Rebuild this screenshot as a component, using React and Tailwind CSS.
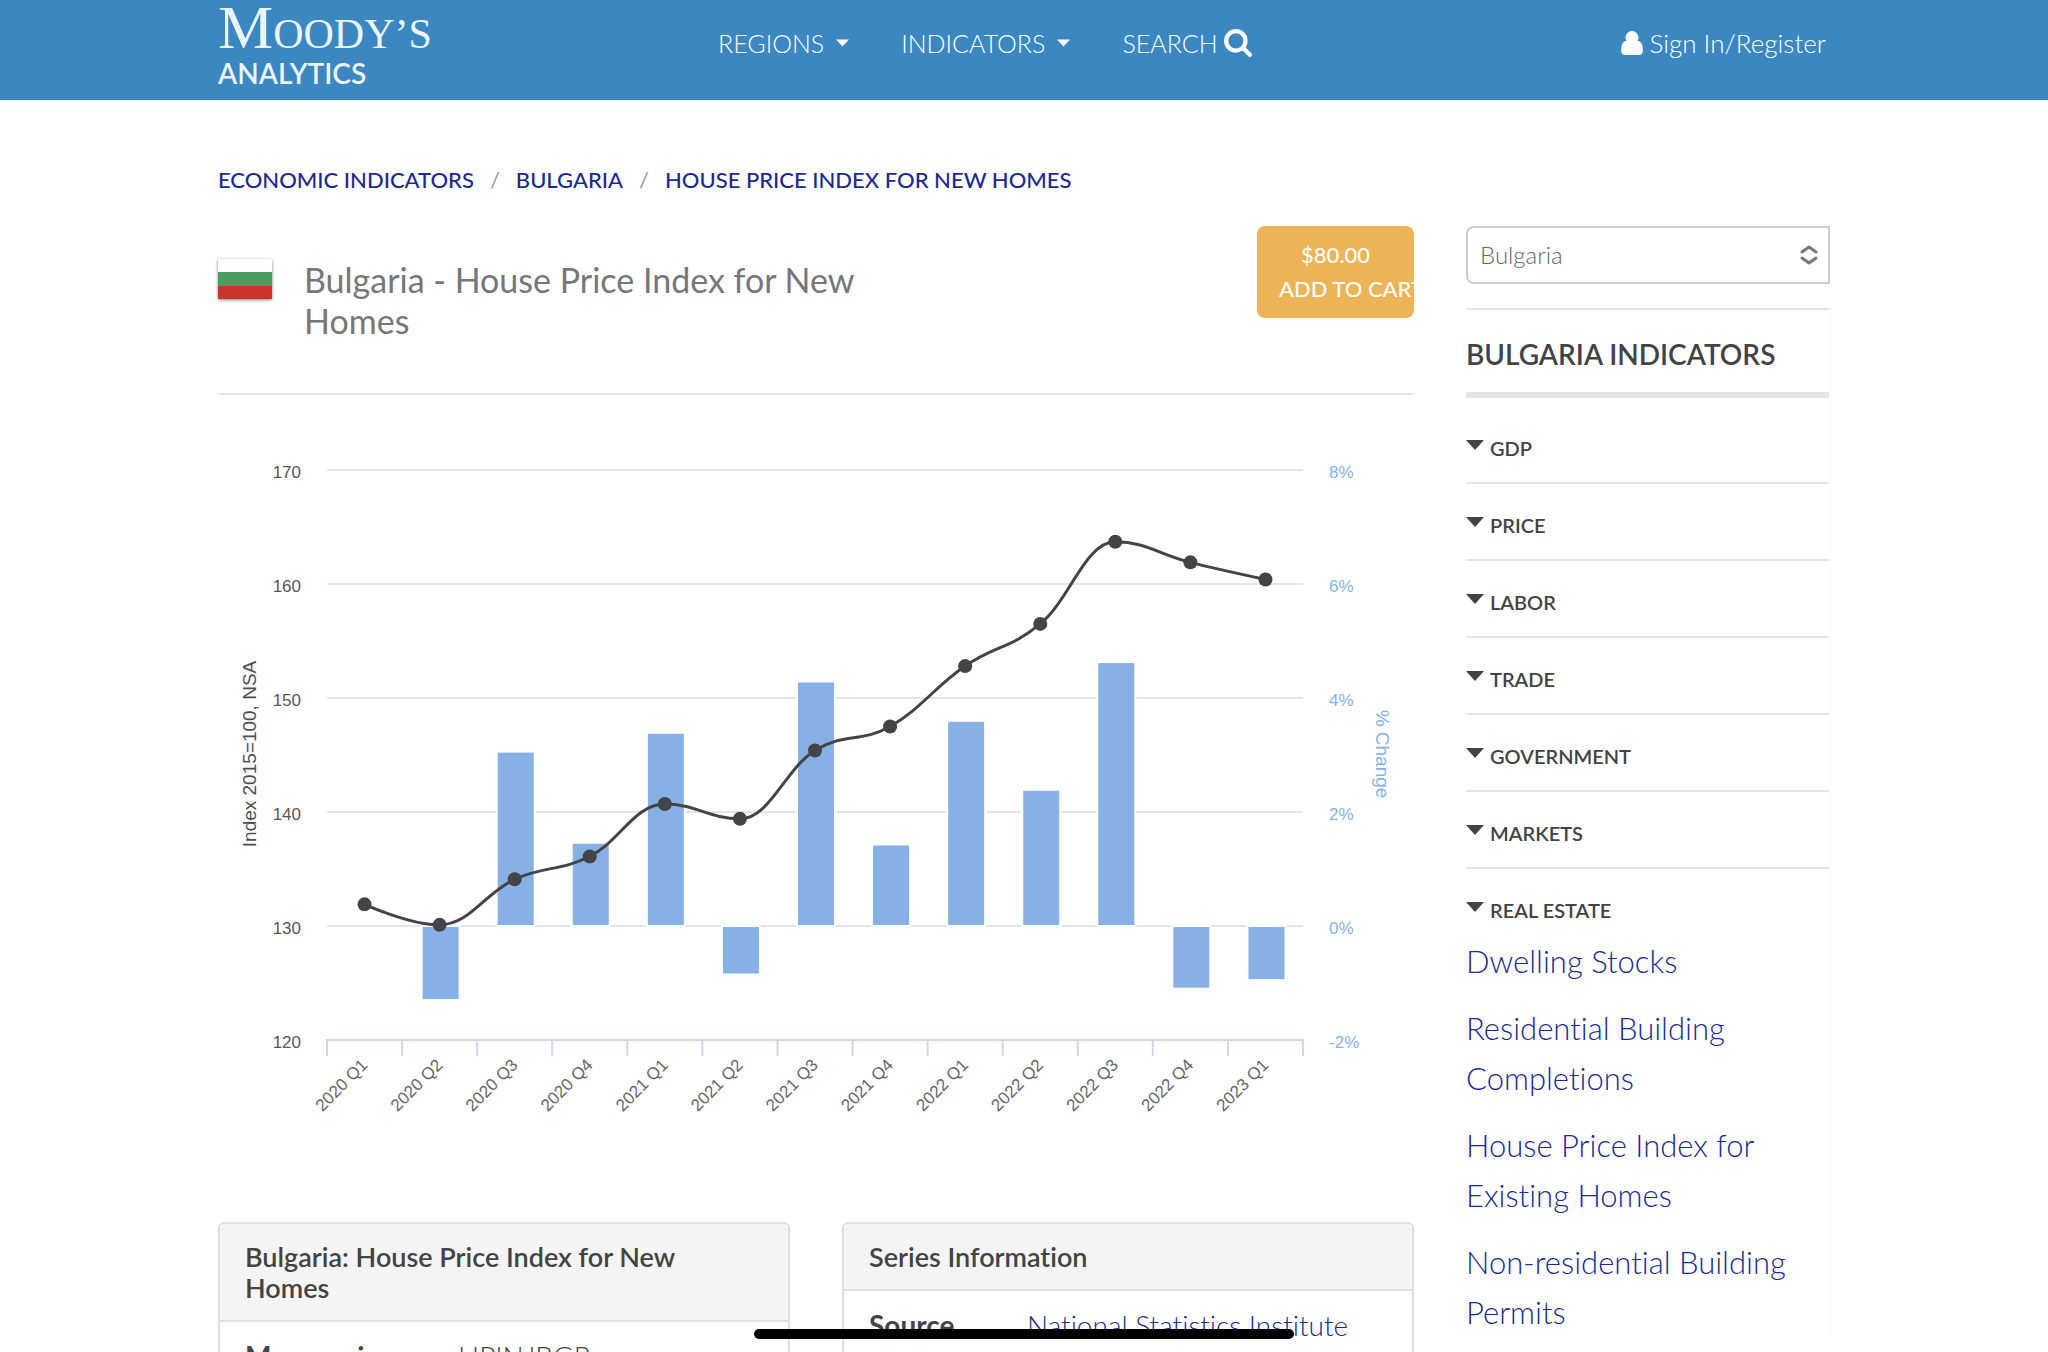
const SERIES = [
    { label: "2020 Q1", index: 131.9, change: null },
    { label: "2020 Q2", index: 130.1, change: -1.3 },
    { label: "2020 Q3", index: 134.1, change: 3.06 },
    { label: "2020 Q4", index: 136.1, change: 1.46 },
    { label: "2021 Q1", index: 140.7, change: 3.39 },
    { label: "2021 Q2", index: 139.4, change: -0.85 },
    { label: "2021 Q3", index: 145.4, change: 4.29 },
    { label: "2021 Q4", index: 147.5, change: 1.43 },
    { label: "2022 Q1", index: 152.8, change: 3.6 },
    { label: "2022 Q2", index: 156.5, change: 2.39 },
    { label: "2022 Q3", index: 163.7, change: 4.63 },
    { label: "2022 Q4", index: 161.9, change: -1.1 },
    { label: "2023 Q1", index: 160.4, change: -0.95 },
];

const GROUPS = ["GDP", "PRICE", "LABOR", "TRADE", "GOVERNMENT", "MARKETS"];

const REAL_ESTATE = [
    "Dwelling Stocks",
    "Residential Building Completions",
    "House Price Index for Existing Homes",
    "Non-residential Building Permits",
];

const PLOT = { left: 109, right: 1085, top: 14, bottom: 584 };
const STEP = (PLOT.right - PLOT.left) / SERIES.length;

const xAt = (i) => PLOT.left + STEP * (i + 0.5);
const yIndex = (v) => PLOT.bottom - ((v - 120) / 50) * (PLOT.bottom - PLOT.top);
const yChange = (v) => PLOT.bottom - ((v + 2) / 10) * (PLOT.bottom - PLOT.top);

// smooth line that never overshoots a local high or low
function splinePath(pts) {
    const s = 1.5;
    const d = s + 1;
    let prevRight = pts[0];
    let path = `M${pts[0].x} ${pts[0].y}`;

    for (let i = 1; i < pts.length; i++) {
        const last = pts[i - 1];
        const p = pts[i];
        const next = pts[i + 1];
        let left = p;
        let right = p;

        if (next) {
            const lx = (s * p.x + last.x) / d;
            let ly = (s * p.y + last.y) / d;
            const rx = (s * p.x + next.x) / d;
            let ry = (s * p.y + next.y) / d;
            const fix = ((ry - ly) * (rx - p.x)) / (rx - lx) + p.y - ry;
            ly += fix;
            ry += fix;

            if (ly > last.y && ly > p.y) {
                ly = Math.max(last.y, p.y);
                ry = 2 * p.y - ly;
            } else if (ly < last.y && ly < p.y) {
                ly = Math.min(last.y, p.y);
                ry = 2 * p.y - ly;
            }
            if (ry > next.y && ry > p.y) {
                ry = Math.max(next.y, p.y);
                ly = 2 * p.y - ry;
            } else if (ry < next.y && ry < p.y) {
                ry = Math.min(next.y, p.y);
                ly = 2 * p.y - ry;
            }
            left = { x: lx, y: ly };
            right = { x: rx, y: ry };
        }

        path += ` C${prevRight.x} ${prevRight.y} ${left.x} ${left.y} ${p.x} ${p.y}`;
        prevRight = right;
    }
    return path;
}

function Chart() {
    const points = SERIES.map((p, i) => ({ x: xAt(i), y: yIndex(p.index) }));

    return (
        <svg
            viewBox="0 0 1196 680"
            role="img"
            aria-label="House price index and quarterly change"
            className="block w-full font-['Liberation_Sans',Arial,sans-serif]"
        >
            {[170, 160, 150, 140, 130].map((v) => (
                <line key={v} x1={PLOT.left} x2={PLOT.right} y1={yIndex(v)} y2={yIndex(v)} stroke="#e4e5e6" strokeWidth="2" />
            ))}

            {[170, 160, 150, 140, 130, 120].map((v, i) => (
                <g key={v} fontSize="17">
                    <text x="83" y={yIndex(v) + 8} textAnchor="end" fill="#555659">{v}</text>
                    <text x="1111" y={yIndex(v) + 8} fill="#87b1e4">{8 - i * 2}%</text>
                </g>
            ))}

            {SERIES.map((p, i) =>
                p.change === null ? null : (
                    <rect
                        key={p.label}
                        x={xAt(i) - 18}
                        width="38"
                        y={Math.min(yChange(p.change), yChange(0))}
                        height={Math.abs(yChange(p.change) - yChange(0))}
                        fill="#87b1e4"
                        stroke="#fff"
                        strokeWidth="2"
                    />
                )
            )}

            <line x1={PLOT.left - 1} x2={PLOT.right + 1} y1={PLOT.bottom} y2={PLOT.bottom} stroke="#cfd8e8" strokeWidth="2" />
            {Array.from({ length: SERIES.length + 1 }, (_, i) => (
                <line
                    key={i}
                    x1={PLOT.left + STEP * i}
                    x2={PLOT.left + STEP * i}
                    y1={PLOT.bottom}
                    y2={PLOT.bottom + 16}
                    stroke="#cfd8e8"
                    strokeWidth="2"
                />
            ))}

            <path d={splinePath(points)} fill="none" stroke="#434348" strokeWidth="3" />
            {points.map((p) => (
                <circle key={p.x} cx={p.x} cy={p.y} r="7" fill="#434348" />
            ))}

            {SERIES.map((p, i) => (
                <text
                    key={p.label}
                    transform={`translate(${xAt(i) + 4} ${PLOT.bottom + 26}) rotate(-45)`}
                    textAnchor="end"
                    fontSize="17"
                    fill="#666"
                >
                    {p.label}
                </text>
            ))}

            <text transform="translate(38 298) rotate(-90)" textAnchor="middle" fontSize="19" fill="#4d4e52">
                Index 2015=100, NSA
            </text>
            <text transform="translate(1158 298) rotate(90)" textAnchor="middle" fontSize="19" fill="#87b1e4">
                % Change
            </text>
        </svg>
    );
}

function Caret({ className }) {
    return (
        <svg viewBox="0 0 18 10" className={className} fill="currentColor" aria-hidden="true">
            <path d="M0 0h18L9 10z" />
        </svg>
    );
}

function SearchIcon() {
    return (
        <svg viewBox="0 128 1664 1664" className="size-7" fill="currentColor" aria-hidden="true">
            <path d="M1152 832q0-185-131.5-316.5t-316.5-131.5-316.5 131.5-131.5 316.5 131.5 316.5 316.5 131.5 316.5-131.5 131.5-316.5zM1664 1664q0 52-38 90t-90 38q-54 0-90-38l-343-342q-179 124-399 124-143 0-273.5-55.5t-225-150-150-225-55.5-273.5 55.5-273.5 150-225 225-150 273.5-55.5 273.5 55.5 225 150 150 225 55.5 273.5q0 220-124 399l343 343q37 37 37 90z" />
        </svg>
    );
}

function UserIcon() {
    return (
        <svg viewBox="0 128 1280 1408" className="h-6 w-[22px]" fill="currentColor" aria-hidden="true">
            <path d="M1280 1271q0 109-62.5 187t-150.5 78h-854q-88 0-150.5-78t-62.5-187q0-85 8.5-160.5t31.5-152 58.5-131 94-89 134.5-34.5q131 128 313 128t313-128q76 0 134.5 34.5t94 89 58.5 131 31.5 152 8.5 160.5zM1024 512q0 159-112.5 271.5t-271.5 112.5-271.5-112.5-112.5-271.5 112.5-271.5 271.5-112.5 271.5 112.5 112.5 271.5z" />
        </svg>
    );
}

function Header() {
    return (
        <header className="h-[100px] bg-[#3b87c1] text-white">
            <div className="mx-auto grid h-full max-w-[1612px] grid-cols-[500px_1fr_auto] items-start">
                <a href="#" className="block text-[#eaf4fc]">
                    <span className="block font-['Liberation_Serif',serif] text-[42px] leading-[54px]">
                        <span className="text-[62px]">M</span>OODY’S
                    </span>
                    <span className="block text-[28px] font-semibold leading-6">ANALYTICS</span>
                </a>
                <nav className="flex items-center gap-[52px] text-[25px] font-light leading-[86px]">
                    <button type="button" className="flex items-center gap-3">
                        REGIONS <Caret className="h-2 w-[13px]" />
                    </button>
                    <button type="button" className="flex items-center gap-3">
                        INDICATORS <Caret className="h-2 w-[13px]" />
                    </button>
                    <button type="button" className="flex items-center gap-[6px]">
                        SEARCH <SearchIcon />
                    </button>
                </nav>
                <a href="#" className="flex items-center gap-[6px] pr-1 text-[26px] font-light leading-[86px]">
                    <UserIcon /> Sign In/Register
                </a>
            </div>
        </header>
    );
}

function Breadcrumb() {
    return (
        <nav className="flex gap-4 text-[22px] font-medium leading-8 text-[#1b2a8f]">
            <a href="#">ECONOMIC INDICATORS</a>
            <span className="font-normal text-[#999]">/</span>
            <a href="#">BULGARIA</a>
            <span className="font-normal text-[#999]">/</span>
            <a href="#">HOUSE PRICE INDEX FOR NEW HOMES</a>
        </nav>
    );
}

function InfoCard({ title, children }) {
    return (
        <section className="rounded-md border-2 border-[#dedede] bg-white">
            <h2 className="rounded-t border-b-2 border-[#dedede] bg-[#f4f4f4] px-[25px] py-[17px] text-[27px] font-semibold leading-[31px]">
                {title}
            </h2>
            {children}
        </section>
    );
}

function Sidebar() {
    return (
        <aside>
            <div className="relative">
                <select
                    aria-label="Country"
                    defaultValue="Bulgaria"
                    className="h-[58px] w-full appearance-none rounded-l-lg border-2 border-[#ccc] bg-white px-3 text-2xl font-light text-[#666]"
                >
                    <option>Bulgaria</option>
                </select>
                <svg
                    viewBox="0 0 18 20"
                    className="pointer-events-none absolute right-3 top-[19px] h-5 w-[18px]"
                    fill="none"
                    stroke="#777"
                    strokeWidth="3"
                    strokeLinecap="round"
                    strokeLinejoin="round"
                    aria-hidden="true"
                >
                    <path d="M2 7l7-5 7 5M2 13l7 5 7-5" />
                </svg>
            </div>

            <div className="mt-6 border-r border-t-2 border-r-[#fafafa] border-t-[#e4e4e4]">
                <h2 className="border-b-[6px] border-[#e4e4e4] pb-5 pt-[26px] text-[28px] font-semibold leading-9 text-[#434343]">
                    BULGARIA INDICATORS
                </h2>
                <ul className="pt-[9px] text-xl font-semibold text-[#434343]">
                    {GROUPS.map((g) => (
                        <li key={g} className="border-b-2 border-[#e4e4e4]">
                            <button type="button" className="flex w-full gap-[6px] pb-[23px] pt-[30px] leading-[22px]">
                                <Caret className="mt-[3px] h-[10px] w-[18px]" />
                                {g}
                            </button>
                        </li>
                    ))}
                    <li>
                        <button type="button" className="flex w-full gap-[6px] pt-[30px] leading-[22px]">
                            <Caret className="mt-[3px] h-[10px] w-[18px]" />
                            REAL ESTATE
                        </button>
                        <ul className="mt-[15px] space-y-[17px] text-[31px] font-light leading-[50px] text-[#1b2a8f]">
                            {REAL_ESTATE.map((name) => (
                                <li key={name}>
                                    <a href="#">{name}</a>
                                </li>
                            ))}
                        </ul>
                    </li>
                </ul>
            </div>
        </aside>
    );
}

export default function App() {
    return (
        <div className="relative h-screen overflow-hidden bg-white font-['Lato',sans-serif] text-[#434343] [font-variant-ligatures:none]">
            <Header />

            <div className="mx-auto max-w-[1612px] pt-16">
                <Breadcrumb />

                <div className="mt-[30px] grid grid-cols-[1fr_364px] gap-[52px]">
                    <main className="min-w-0">
                        <div className="flex h-[169px] items-start border-b-2 border-[#e4e4e4]">
                            <svg
                                viewBox="0 0 54 40"
                                className="mt-[33px] h-10 w-[54px] shrink-0 shadow-[0_1px_3px_rgba(0,0,0,0.5)]"
                                aria-hidden="true"
                            >
                                <path fill="#fff" d="M0 0h54v13H0z" />
                                <path fill="#4a9a62" d="M0 13h54v14H0z" />
                                <path fill="#cb342d" d="M0 27h54v13H0z" />
                            </svg>
                            <h1 className="ml-8 mt-[33px] w-[600px] text-[34px] leading-[41px] text-[#777]">
                                Bulgaria - House Price Index for New Homes
                            </h1>
                            <button
                                type="button"
                                className="ml-auto flex h-[92px] w-[157px] flex-col items-start justify-center overflow-hidden whitespace-nowrap rounded-lg bg-[#ecb357] px-[22px] text-[22px] font-medium leading-[34px] text-white"
                            >
                                <span className="w-full text-center">$80.00</span>
                                <span>ADD TO CART</span>
                            </button>
                        </div>

                        <div className="mt-[61px]">
                            <Chart />
                        </div>

                        <div className="mt-[86px] grid grid-cols-2 items-start gap-[52px]">
                            <InfoCard title="Bulgaria: House Price Index for New Homes">
                                <dl className="grid grid-cols-[213px_1fr] px-[25px] py-4 text-[28px] leading-9">
                                    <dt className="font-bold">Mnemonic</dt>
                                    <dd className="font-light">HPINJBGR</dd>
                                </dl>
                            </InfoCard>
                            <InfoCard title="Series Information">
                                <dl className="grid grid-cols-[158px_1fr] px-[25px] py-4 text-[28px] leading-9">
                                    <dt className="font-bold">Source</dt>
                                    <dd className="font-light text-[#1b2a8f]">
                                        <a href="#">National Statistics Institute</a>
                                    </dd>
                                </dl>
                            </InfoCard>
                        </div>
                    </main>

                    <Sidebar />
                </div>
            </div>

            {/* home indicator */}
            <div className="absolute bottom-[13px] left-1/2 h-[10px] w-[540px] -translate-x-1/2 rounded-full bg-black" />
        </div>
    );
}
